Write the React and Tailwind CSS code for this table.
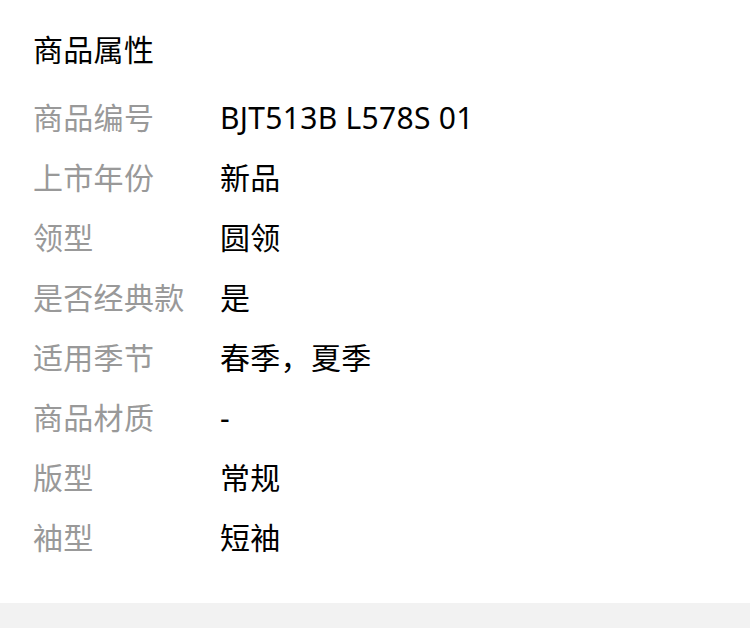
const rows = [
  ['商品编号', 'BJT513B L578S 01'],
  ['上市年份', '新品'],
  ['领型', '圆领'],
  ['是否经典款', '是'],
  ['适用季节', '春季，夏季'],
  ['商品材质', '-'],
  ['版型', '常规'],
  ['袖型', '短袖'],
];

export default function App() {
  return (
    <div
      className="min-h-[628px] bg-[#f2f2f2] text-[30px] tracking-[0.3px]"
      style={{ fontFamily: '"Noto Sans", "Noto Sans CJK SC", sans-serif' }}
    >
      <div className="bg-white pl-[33px] pt-[20px] pb-[35px]">
        <h2 className="leading-[60px] text-black mb-[8px]">商品属性</h2>
        <div>
          {rows.map(([label, value]) => (
            <div key={label} className="flex leading-[60px]">
              <div className="w-[187px] shrink-0 text-[#999999]">{label}</div>
              <div className="text-black">{value}</div>
            </div>
          ))}
        </div>
      </div>
    </div>
  );
}
